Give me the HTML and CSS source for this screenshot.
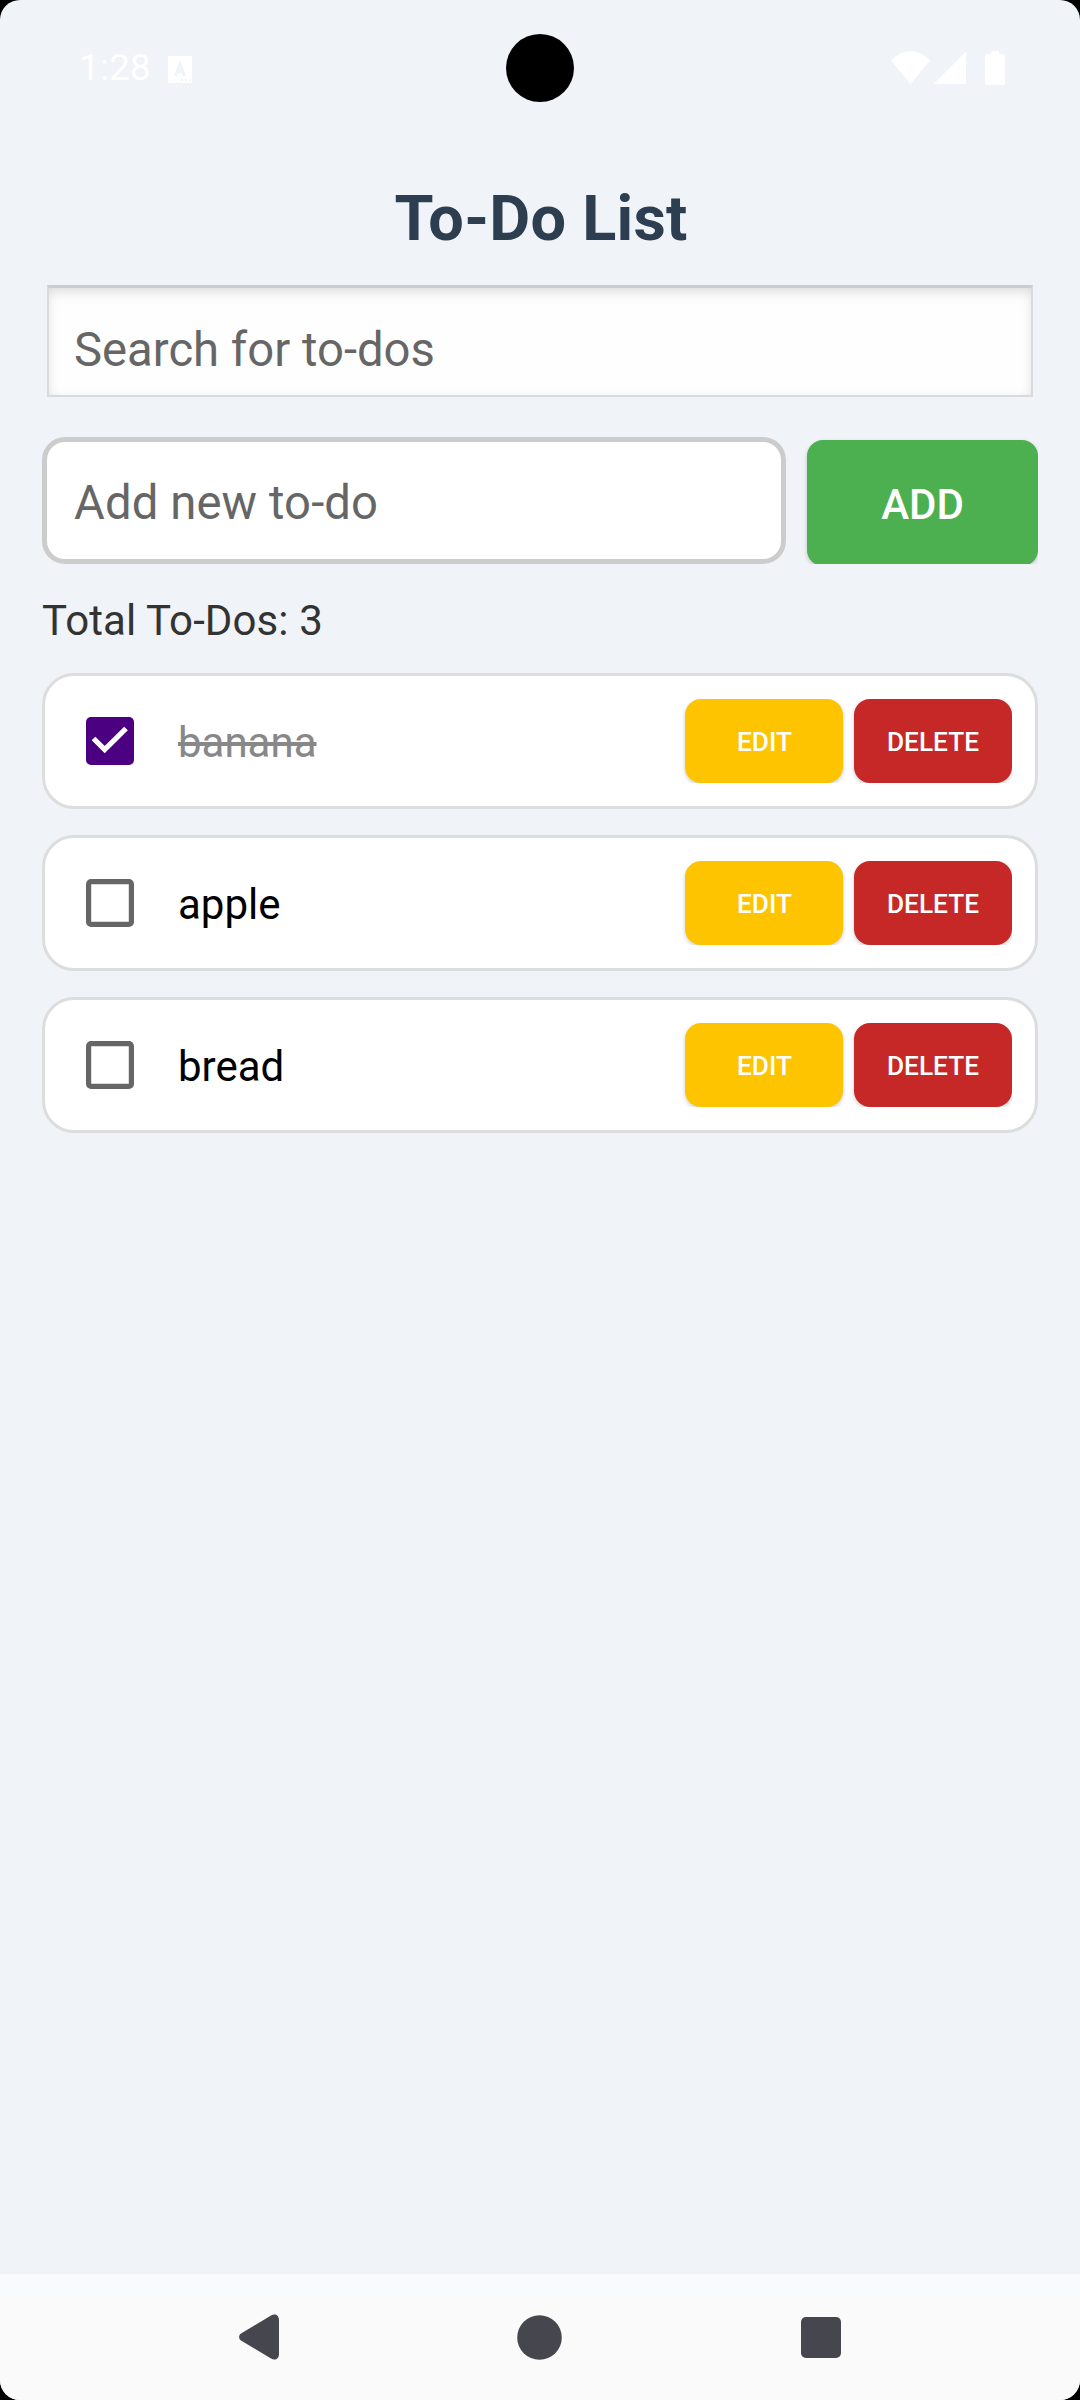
FILE: index.html
```html
<!DOCTYPE html>
<html lang="en">
<head>
<meta charset="utf-8">
<title>To-Do List</title>
<link rel="stylesheet" href="styles.css">
</head>
<body>
<div class="screen">
  <header class="status">
    <div class="status-left">
      <span class="clock">1:28</span>
      <svg class="keyboard-icon" width="24" height="27" viewBox="0 0 24 27"><rect width="24" height="27" rx="2" fill="#fff"/><path d="M7.500 20 12 8.500l4.500 11.500M9.200 16h5.600" fill="none" stroke="#f0f4f8" stroke-width="3.200"/><path d="M13 24h2m2 0h2m2 0h2" stroke="#f0f4f8" stroke-width="2"/></svg>
    </div>
    <span class="camera"></span>
    <svg class="status-icons" width="114" height="34" viewBox="0 0 114 34" fill="#fff"><path d="M0 9.500C11-3 28-3 39 9.500L19.500 33z"/><path d="M42.500 33 75 .5V33z"/><path d="M100 0h8v3h3.500a2.500 2.500 0 0 1 2.500 2.500v26a2.500 2.500 0 0 1-2.500 2.500h-15a2.500 2.500 0 0 1-2.500-2.500v-26A2.500 2.500 0 0 1 96.500 3h3.500z"/></svg>
  </header>
  <main class="content">
    <h1 class="title">To-Do List</h1>
    <div class="search">Search for to-dos</div>
    <div class="add-row">
      <div class="new-item">Add new to-do</div>
      <div class="add-clip"><div class="button add">ADD</div></div>
    </div>
    <p class="total">Total To-Dos: 3</p>
    <ul class="list">
      <li class="card">
        <svg class="check" width="48" height="48" viewBox="0 0 48 48"><rect width="48" height="48" rx="5" fill="#4b0082"/><path d="M7.500 21.500 18.700 32.700 40 11.500" fill="none" stroke="#fff" stroke-width="5.200"/></svg>
        <span class="label done">banana</span>
        <div class="actions"><div class="button edit">EDIT</div><div class="button delete">DELETE</div></div>
      </li>
      <li class="card">
        <svg class="check" width="48" height="48" viewBox="0 0 48 48"><rect x="2.600" y="2.600" width="42.800" height="42.800" rx="2.500" fill="none" stroke="#666" stroke-width="5.200"/></svg>
        <span class="label">apple</span>
        <div class="actions"><div class="button edit">EDIT</div><div class="button delete">DELETE</div></div>
      </li>
      <li class="card">
        <svg class="check" width="48" height="48" viewBox="0 0 48 48"><rect x="2.600" y="2.600" width="42.800" height="42.800" rx="2.500" fill="none" stroke="#666" stroke-width="5.200"/></svg>
        <span class="label">bread</span>
        <div class="actions"><div class="button edit">EDIT</div><div class="button delete">DELETE</div></div>
      </li>
    </ul>
  </main>
  <nav class="navbar">
    <svg width="40" height="46" viewBox="0 0 40 46"><path d="M2 19.500 32 1.500C36-1 40 1 40 6v34c0 5-4 7-8 4.500L2 26.500c-2.500-1.500-2.500-5.500 0-7z" fill="#46464f"/></svg>
    <svg width="45" height="45" viewBox="0 0 45 45"><circle cx="22.500" cy="22.500" r="22.300" fill="#46464f"/></svg>
    <svg width="40" height="41" viewBox="0 0 40 41"><rect width="40" height="41" rx="5" fill="#46464f"/></svg>
  </nav>
</div>
</body>
</html>
```
FILE: styles.css
```css
* { box-sizing: border-box; }
body { margin: 0; background: #000; font-family: Roboto, sans-serif; }
.screen {
  width: 1080px;
  height: 2400px;
  display: flex;
  flex-direction: column;
  background: #f0f4f8;
  border-radius: 20px;
  overflow: hidden;
}
.status {
  height: 136px;
  flex: none;
  display: grid;
  grid-template-columns: 1fr 68px 1fr;
  align-items: center;
  padding: 0 75px 0 79px;
  color: #fff;
}
.status-left { display: flex; align-items: center; gap: 17px; }
.clock { font-size: 36.75px; line-height: 44px; letter-spacing: .3px; }
.keyboard-icon { margin-top: 2px; }
.camera { width: 68px; height: 68px; border-radius: 50%; background: #000; margin-left: -2px; }
.status-icons { justify-self: end; }
.content { flex: 1; padding: 0 42px; }
.title {
  margin: 43px 0 0;
  padding-left: 2px;
  font-size: 63px;
  line-height: 80px;
  font-weight: 700;
  letter-spacing: .25px;
  color: #2c3e50;
  text-align: center;
}
.search {
  margin: 26px 5px 0;
  height: 112px;
  padding: 16px 25px 0 25px;
  border: 2px solid #d8dade;
  border-top: 3px solid #c9cdd0;
  background: #fefefe;
  box-shadow: inset 0 8px 14px -3px rgba(0, 0, 0, .1), inset 0 0 10px rgba(0, 0, 0, .05);
  font-size: 47.25px;
  line-height: 92px;
  color: #666;
}
.add-row { display: flex; margin-top: 40px; }
.new-item {
  width: 744px;
  height: 127px;
  padding: 5px 27px 0;
  border: 5px solid #ccc;
  border-radius: 23px;
  background: #fff;
  font-size: 47.25px;
  line-height: 113px;
  letter-spacing: .1px;
  color: #666;
}
.add-clip { flex: 1; height: 127px; padding: 3px 0 0 21px; overflow: hidden; }
.button {
  border-radius: 16px;
  color: #fff;
  font-weight: 500;
  text-align: center;
  box-shadow: 0 2px 4px rgba(0, 0, 0, .2);
}
.add { height: 126px; line-height: 130px; font-size: 42px; background: #4caf50; }
.total { margin: 32px 0 0; font-size: 42px; line-height: 50px; letter-spacing: .1px; color: #333; }
.list { margin: 27px 0 0; padding: 0; list-style: none; display: grid; gap: 26px; }
.card {
  height: 136px;
  display: flex;
  align-items: center;
  padding: 0 23px 0 41px;
  border: 3px solid #ddd;
  border-radius: 32px;
  background: #fff;
}
.label { flex: 1; margin: 3px 0 0 44px; font-size: 42px; line-height: 50px; color: #000; }
.done { color: #888; text-decoration: line-through; }
.actions { display: flex; gap: 11px; padding-left: 4px; overflow: hidden; }
.actions .button { width: 158px; height: 84px; line-height: 86px; font-size: 26.25px; }
.actions .edit { padding-left: 1px; background: #ffc400; }
.delete { background: #c62828; }
.navbar {
  height: 126px;
  flex: none;
  display: flex;
  align-items: center;
  justify-content: space-between;
  padding: 0 239.5px 0 238.5px;
  background: linear-gradient(#f8fafc 21px, #fafafa 21px);
}
```
